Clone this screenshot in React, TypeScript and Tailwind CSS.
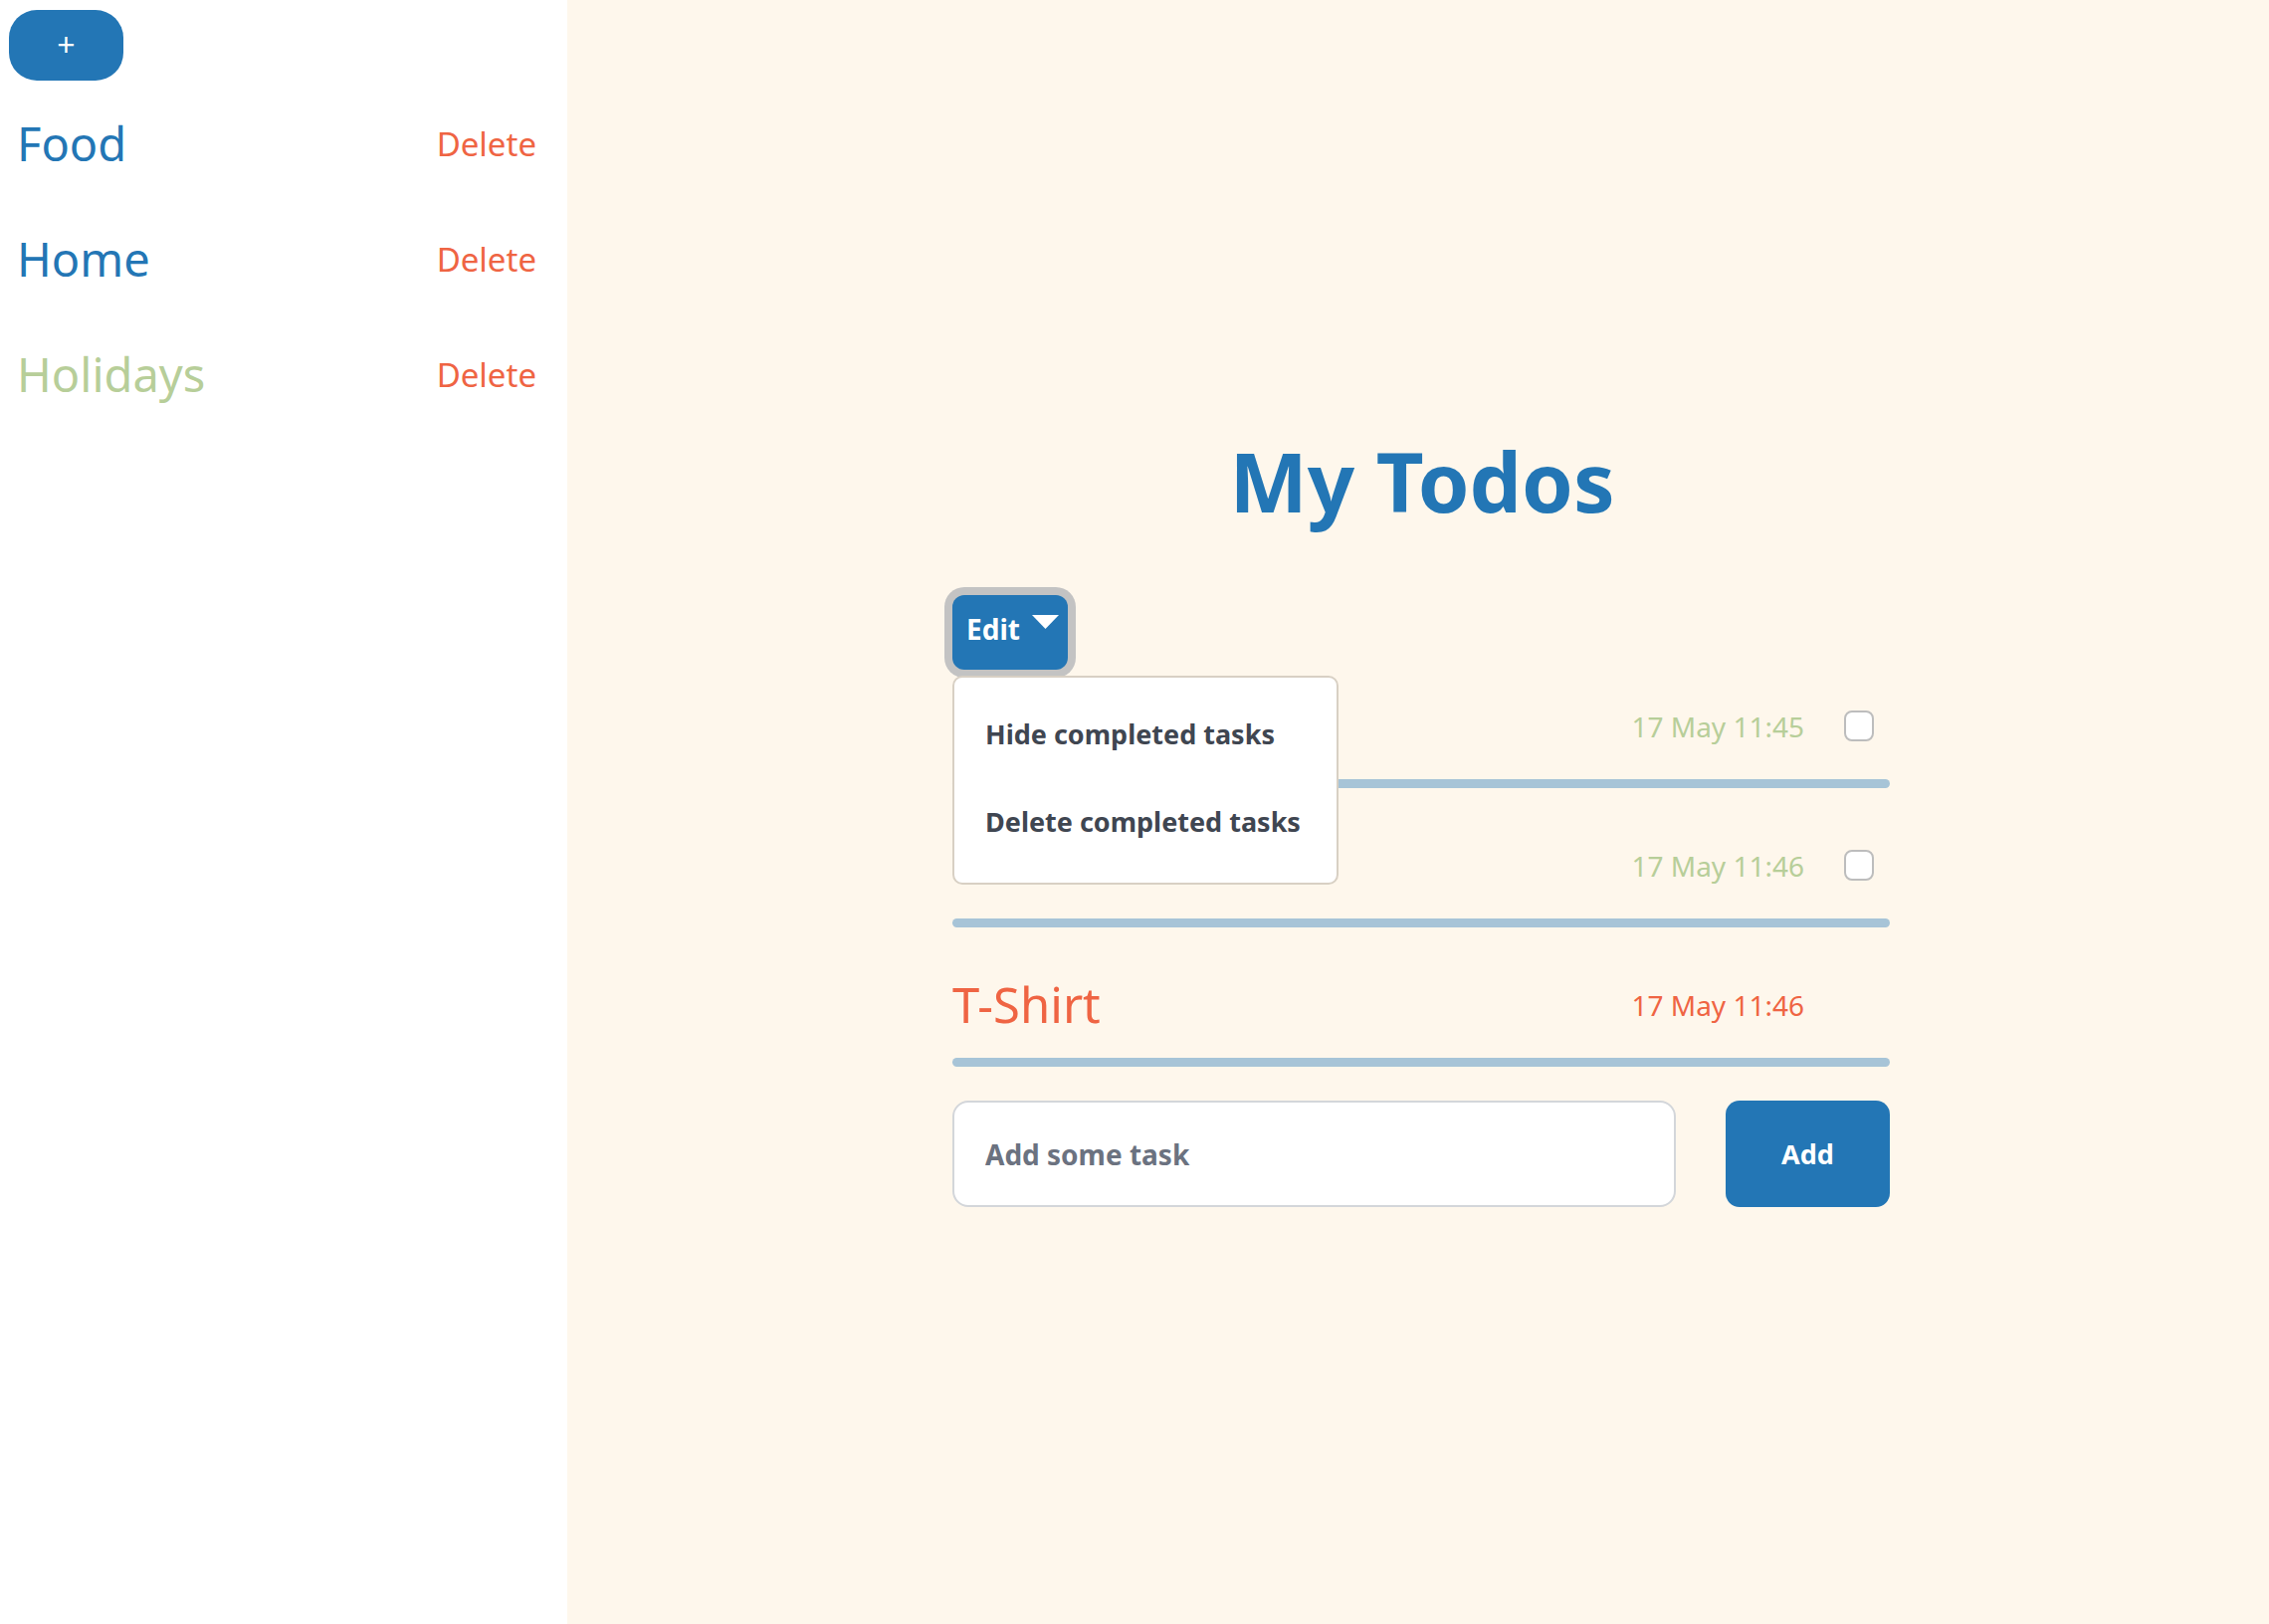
import React from "react";

const FONT = { fontFamily: '"Noto Sans", "Liberation Sans", sans-serif' };

function Sidebar() {
  const lists = [
    { name: "Food", color: "text-[#2376b5]" },
    { name: "Home", color: "text-[#2376b5]" },
    { name: "Holidays", color: "text-[#b7ce99]" },
  ];
  return (
    <aside className="w-[570px] shrink-0 bg-white min-h-screen">
      <div className="pl-[9px] pt-[10px]">
        <button className="w-[115px] h-[71px] rounded-[28px] bg-[#2376b5] text-white text-[32px] leading-none flex items-center justify-center pb-[2px]">
          +
        </button>
      </div>
      <ul className="mt-[5px] pl-[17px] pr-[31px]">
        {lists.map((l) => (
          <li key={l.name} className="h-[116px] flex items-center justify-between">
            <span className={`text-[47px] leading-none ${l.color}`}>{l.name}</span>
            <span className="text-[33px] leading-none text-[#ef6443]">Delete</span>
          </li>
        ))}
      </ul>
    </aside>
  );
}

function Row({ title, date, dateColor, titleColor, checkbox }: { title: string; date: string; dateColor: string; titleColor: string; checkbox: boolean }) {
  return (
    <div className="mb-[24px]">
      <div className="h-[107px] flex items-center">
        <span className={`flex-1 text-[49px] leading-none ${titleColor}`}>{title}</span>
        <span className={`text-[28px] leading-none ${dateColor}`}>{date}</span>
        <div
          className={`ml-[40px] mr-[16px] w-[30px] h-[31px] rounded-[8px] ${
            checkbox ? "border-2 border-[#bdbdbd] bg-white" : "invisible"
          }`}
        />
      </div>
      <div className="h-[9px] rounded-full bg-[#a7c4d7]" />
    </div>
  );
}

export default function App() {
  return (
    <div className="flex min-h-screen" style={FONT}>
      <Sidebar />
      <main className="flex-1 bg-[#fef7ec] min-h-screen pt-[441px]">
        <div className="w-[942px] ml-[387px]">
          <h1 className="text-center text-[83px] leading-none font-bold text-[#2376b5] pl-[2px]">My Todos</h1>
          <div className="relative mt-[74px] w-[116px]">
            <button className="w-[116px] h-[75px] rounded-[12px] bg-[#2376b5] ring-[8px] ring-[#c3c3c3] flex items-start pt-[20px] pl-[14px] text-white">
              <span className="text-[28px] leading-none font-bold">Edit</span>
              <svg className="ml-[12px]" width="27" height="14" viewBox="0 0 27 14">
                <polygon points="0,0 27,0 13.5,14" fill="#ffffff" />
              </svg>
            </button>
            <div className="absolute z-10 left-0 top-[81px] w-[388px] h-[210px] bg-white border-2 border-[#d8d0c4] rounded-[10px] pt-[12px] pb-[18px]">
              <div className="h-[88px] flex items-center px-[31px] text-[27px] leading-none font-bold text-[#3f4651]">
                Hide completed tasks
              </div>
              <div className="h-[88px] flex items-center px-[31px] text-[27px] leading-none font-bold text-[#3f4651]">
                Delete completed tasks
              </div>
            </div>
          </div>
          <div className="mt-[3px] flex flex-col">
            <Row title="" date="17 May 11:45" dateColor="text-[#b7ce99]" titleColor="text-[#2376b5]" checkbox />
            <Row title="" date="17 May 11:46" dateColor="text-[#b7ce99]" titleColor="text-[#2376b5]" checkbox />
            <Row title="T-Shirt" date="17 May 11:46" dateColor="text-[#ef6443]" titleColor="text-[#ef6443]" checkbox={false} />
          </div>
          <div className="flex mt-[10px] gap-[50px]">
            <input
              className="flex-1 h-[107px] bg-white border-2 border-[#d3d6da] rounded-[16px] pl-[31px] text-[28px] font-bold text-[#3f4651] placeholder:text-[#6b7280] outline-none"
              placeholder="Add some task"
            />
            <button className="w-[165px] h-[107px] rounded-[14px] bg-[#2376b5] text-white text-[27px] font-bold leading-none">
              Add
            </button>
          </div>
        </div>
      </main>
    </div>
  );
}
